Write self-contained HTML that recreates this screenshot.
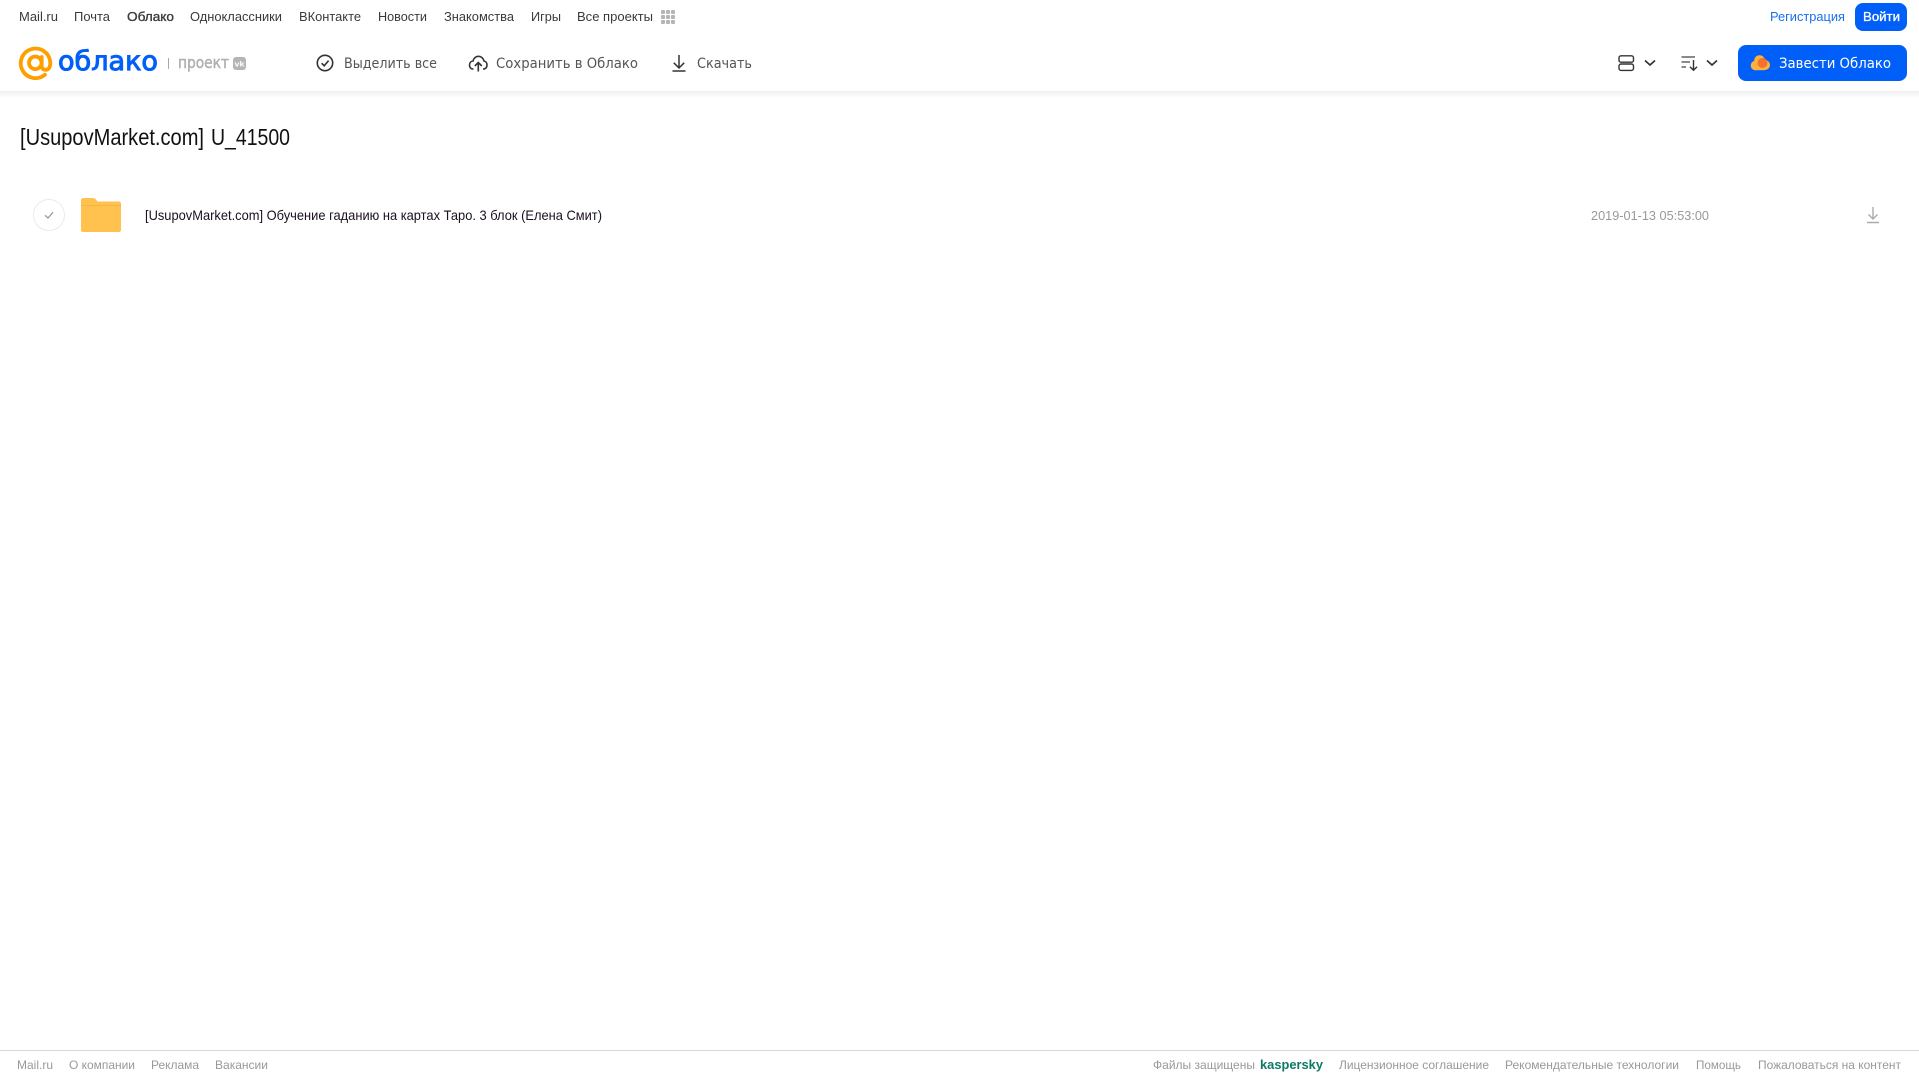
<!DOCTYPE html>
<html lang="ru">
<head>
<meta charset="utf-8">
<title>[UsupovMarket.com] U_41500</title>
<style>
html,body{margin:0;padding:0;background:#fff;width:1919px;height:1079px;overflow:hidden}
svg{position:absolute;left:0;top:0;display:block}
text{font-family:"Liberation Sans",Arial,sans-serif;white-space:pre}
.n{font-size:13px;fill:#3a3a3a}
.t{font-family:"DejaVu Sans","Liberation Sans",sans-serif;font-size:14px;fill:#555}
.f{font-size:12px;fill:#999}
</style>
</head>
<body>
<svg width="1919" height="1079" viewBox="0 0 1919 1079" xmlns="http://www.w3.org/2000/svg">
<defs>
<linearGradient id="sh" x1="0" y1="0" x2="0" y2="1"><stop offset="0" stop-color="#f0f0f0"/><stop offset="1" stop-color="#fff"/></linearGradient>
</defs>
<rect x="0" y="91" width="1919" height="7" fill="url(#sh)"/>

<!-- top nav -->
<text class="n" x="19" y="21" textLength="39" lengthAdjust="spacingAndGlyphs">Mail.ru</text>
<text class="n" x="74" y="21" textLength="36" lengthAdjust="spacingAndGlyphs">Почта</text>
<text class="n" x="127" y="21" textLength="47" lengthAdjust="spacingAndGlyphs" stroke="#3a3a3a" stroke-width=".35">Облако</text>
<text class="n" x="190" y="21" textLength="92" lengthAdjust="spacingAndGlyphs">Одноклассники</text>
<text class="n" x="299" y="21" textLength="62" lengthAdjust="spacingAndGlyphs">ВКонтакте</text>
<text class="n" x="378" y="21" textLength="49" lengthAdjust="spacingAndGlyphs">Новости</text>
<text class="n" x="444" y="21" textLength="70" lengthAdjust="spacingAndGlyphs">Знакомства</text>
<text class="n" x="531" y="21" textLength="30" lengthAdjust="spacingAndGlyphs">Игры</text>
<text class="n" x="577" y="21" textLength="76" lengthAdjust="spacingAndGlyphs">Все проекты</text>
<g fill="#b5b5b5">
<rect x="661" y="10" width="4" height="4" rx="1"/><rect x="666" y="10" width="4" height="4" rx="1"/><rect x="671" y="10" width="4" height="4" rx="1"/>
<rect x="661" y="15" width="4" height="4" rx="1"/><rect x="666" y="15" width="4" height="4" rx="1"/><rect x="671" y="15" width="4" height="4" rx="1"/>
<rect x="661" y="20" width="4" height="4" rx="1"/><rect x="666" y="20" width="4" height="4" rx="1"/><rect x="671" y="20" width="4" height="4" rx="1"/>
</g>
<text x="1770" y="21" font-size="13" fill="#1a6ff0" textLength="75" lengthAdjust="spacingAndGlyphs">Регистрация</text>
<rect x="1855" y="3" width="52" height="28" rx="8" fill="#005ff9"/>
<text x="1863" y="21" font-size="13" fill="#fff" stroke="#fff" stroke-width=".3" textLength="37" lengthAdjust="spacingAndGlyphs">Войти</text>

<!-- logo -->
<path d="M45 74.7A14.800 14.800 0 1 1 50.300 62.500C50.300 67 48.800 69.800 45.700 69.800C43 69.800 41.700 68 41.700 66V57" fill="none" stroke="#ff9e00" stroke-width="3.800" stroke-linecap="round"/>
<circle cx="35.300" cy="62.800" r="6.300" fill="none" stroke="#ff9e00" stroke-width="3.800"/>
<text x="58" y="70" style="font-family:'DejaVu Sans',sans-serif" font-size="27" fill="#005ff9" stroke="#005ff9" stroke-width="1" textLength="100" lengthAdjust="spacingAndGlyphs">облако</text>
<rect x="168" y="58" width="1" height="11" fill="#aaa"/>
<text x="178" y="68" style="font-family:'DejaVu Sans',sans-serif" font-size="16" fill="#b0b0b0" stroke="#b0b0b0" stroke-width=".5" textLength="51" lengthAdjust="spacingAndGlyphs">проект</text>
<rect x="233" y="57" width="13" height="13" rx="3" fill="#b5b5b5"/>
<text x="234.500" y="66.500" font-size="7" font-weight="700" fill="#fff" textLength="10" lengthAdjust="spacingAndGlyphs">vk</text>

<!-- toolbar -->
<circle cx="325" cy="63" r="7.700" fill="none" stroke="#333" stroke-width="1.600"/>
<path d="M321.600 63.200L324.200 65.800L328.600 60.600" fill="none" stroke="#333" stroke-width="1.600"/>
<text class="t" x="344" y="68" textLength="93" lengthAdjust="spacingAndGlyphs">Выделить все</text>
<path d="M473.500 69H473C470.500 69 469.500 67 469.500 65C469.500 62.800 471 61.200 473 61C473.600 58.200 475.800 56.300 478.400 56.300C481.200 56.300 483.400 58.300 484 61C486 61.300 487 63.200 487 65C487 67 485.800 69 483.500 69H483" fill="none" stroke="#333" stroke-width="1.600"/>
<path d="M478.300 71.500V62.500M474.800 66L478.300 62.500L481.800 66" fill="none" stroke="#333" stroke-width="1.600"/>
<text class="t" x="496" y="68" textLength="142" lengthAdjust="spacingAndGlyphs">Сохранить в Облако</text>
<path d="M679 55V68M673.800 62.800L679 68L684.200 62.800M672.500 71H685.500" fill="none" stroke="#333" stroke-width="1.500"/>
<text class="t" x="697" y="68" textLength="55" lengthAdjust="spacingAndGlyphs">Скачать</text>

<!-- view / sort -->
<rect x="1619" y="55.800" width="14.500" height="6.400" rx="2" fill="none" stroke="#333" stroke-width="1.400"/>
<rect x="1619" y="64" width="14.500" height="6.400" rx="2" fill="none" stroke="#333" stroke-width="1.400"/>
<path d="M1645 60.500L1650 65L1655 60.500" fill="none" stroke="#333" stroke-width="1.700"/>
<path d="M1681.500 57H1695M1681.500 62H1690M1681.500 67H1686" fill="none" stroke="#444" stroke-width="1.200"/>
<path d="M1693.500 60V70M1690 66.800L1693.500 70.300L1697 66.800" fill="none" stroke="#333" stroke-width="1.400"/>
<path d="M1707 60.500L1712 65L1717 60.500" fill="none" stroke="#333" stroke-width="1.700"/>

<!-- CTA -->
<rect x="1738" y="45" width="169" height="36" rx="8" fill="#005ff9"/>
<g fill="#ffb13d">
<circle cx="1755.500" cy="65.500" r="4.800"/><circle cx="1759.500" cy="60.500" r="5.300"/><circle cx="1765" cy="65" r="5"/>
<rect x="1755.500" y="64" width="9.500" height="6.200"/>
</g>
<circle cx="1762.500" cy="63" r="5" fill="#f4722b"/>
<text x="1779" y="68" style="font-family:'DejaVu Sans',sans-serif" font-size="14" fill="#fff" textLength="112" lengthAdjust="spacingAndGlyphs">Завести Облако</text>

<!-- title -->
<text x="20" y="145" font-size="23" fill="#111" textLength="184" lengthAdjust="spacingAndGlyphs">[UsupovMarket.com]</text>
<text x="211" y="145" font-size="23" fill="#111" textLength="79" lengthAdjust="spacingAndGlyphs">U_41500</text>

<!-- row -->
<circle cx="49" cy="215" r="15.500" fill="#fff" stroke="#ebebeb" stroke-width="1"/>
<path d="M45 215.300L48 218L53 212.300" fill="none" stroke="#999" stroke-width="1.300"/>
<path d="M81 200C81 198.900 81.900 198 83 198H93C94.200 198 95.200 198.600 96 199.600L97.500 201.500H119C120.100 201.500 121 202.400 121 203.500V230C121 231.100 120.100 232 119 232H83C81.900 232 81 231.100 81 230Z" fill="#ffc24f"/>
<rect x="81" y="205" width="40" height="1" fill="#f7b440"/>
<text x="145" y="220" font-size="14" fill="#1a1020" textLength="457" lengthAdjust="spacingAndGlyphs">[UsupovMarket.com] Обучение гаданию на картах Таро. 3 блок (Елена Смит)</text>
<text x="1591" y="220" font-size="13" fill="#999" textLength="118" lengthAdjust="spacingAndGlyphs">2019-01-13 05:53:00</text>
<path d="M1873 207V219M1868.500 214.500L1873 219L1877.500 214.500M1867 222.500H1879" fill="none" stroke="#aaa" stroke-width="1.400"/>

<!-- footer -->
<rect x="0" y="1050" width="1919" height="1" fill="#d6d6d6"/>
<text class="f" x="17" y="1069" textLength="36" lengthAdjust="spacingAndGlyphs">Mail.ru</text>
<text class="f" x="69" y="1069" textLength="66" lengthAdjust="spacingAndGlyphs">О компании</text>
<text class="f" x="151" y="1069" textLength="48" lengthAdjust="spacingAndGlyphs">Реклама</text>
<text class="f" x="215" y="1069" textLength="53" lengthAdjust="spacingAndGlyphs">Вакансии</text>
<text class="f" x="1153" y="1069" textLength="102" lengthAdjust="spacingAndGlyphs">Файлы защищены</text>
<text x="1260" y="1069" font-size="13" font-weight="700" fill="#0e7a66" textLength="63" lengthAdjust="spacingAndGlyphs">kaspersky</text>
<text class="f" x="1339" y="1069" textLength="150" lengthAdjust="spacingAndGlyphs">Лицензионное соглашение</text>
<text class="f" x="1505" y="1069" textLength="174" lengthAdjust="spacingAndGlyphs">Рекомендательные технологии</text>
<text class="f" x="1696" y="1069" textLength="45" lengthAdjust="spacingAndGlyphs">Помощь</text>
<text class="f" x="1758" y="1069" textLength="143" lengthAdjust="spacingAndGlyphs">Пожаловаться на контент</text>
</svg>
</body>
</html>
